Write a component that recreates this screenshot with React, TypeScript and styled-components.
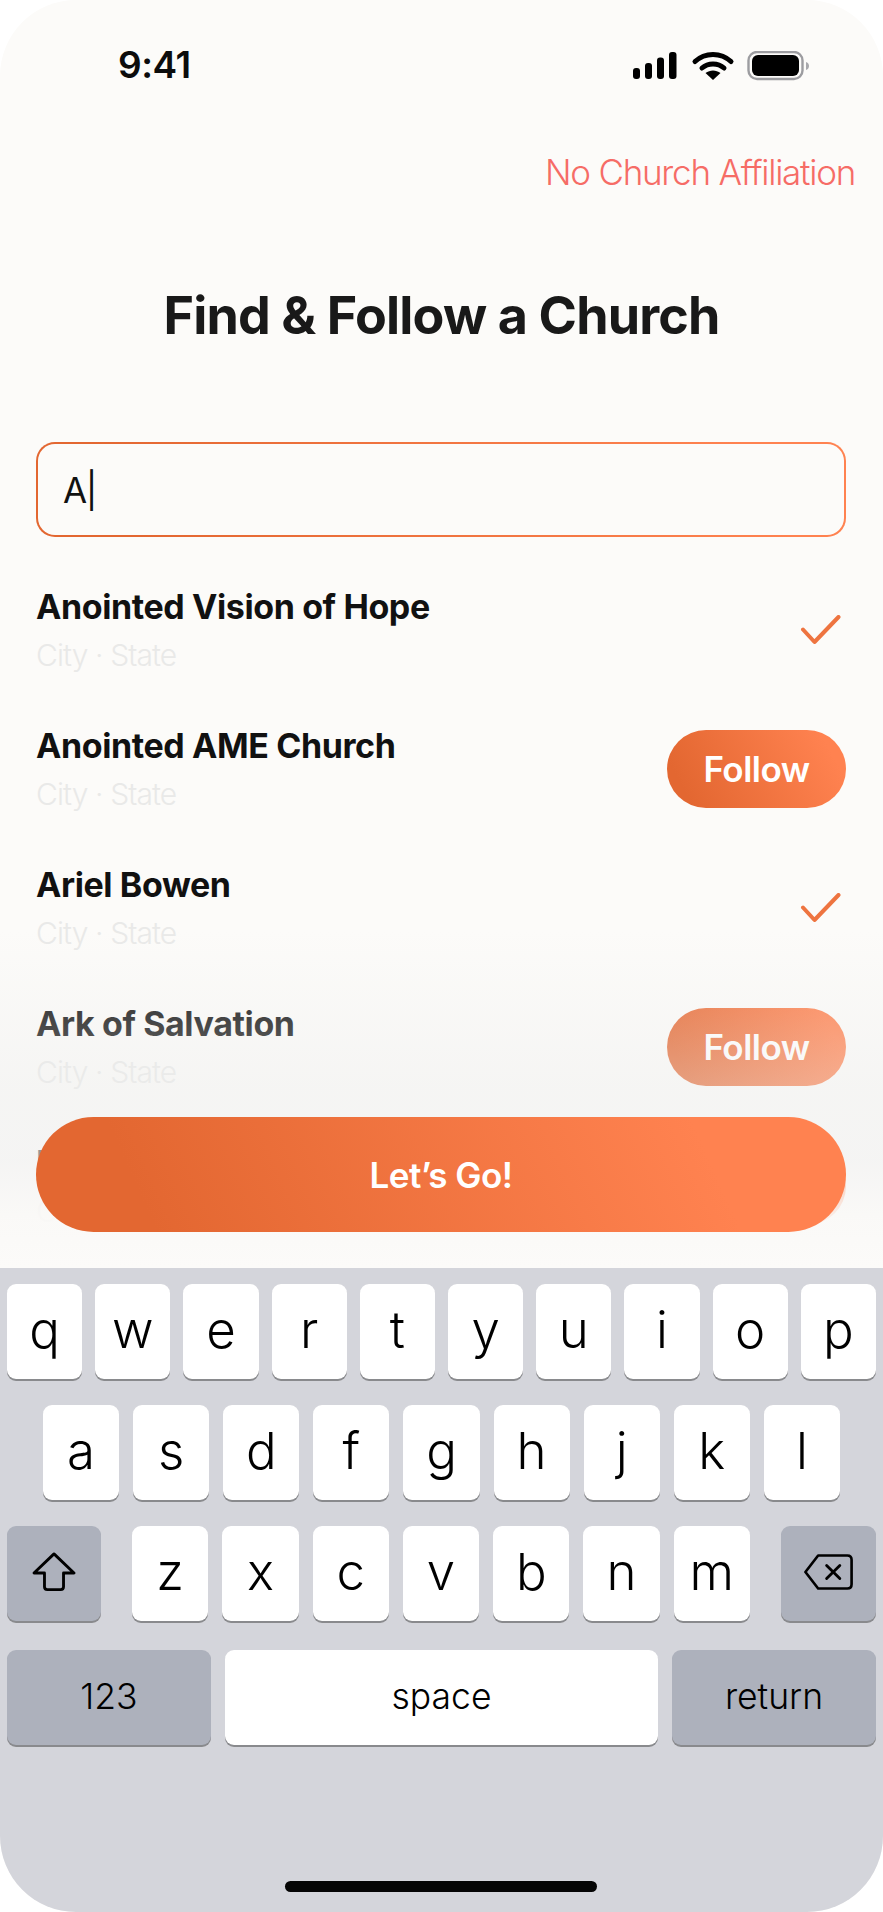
import React from 'react';
import styled, { createGlobalStyle } from 'styled-components';

const Global = createGlobalStyle`
  html, body { margin: 0; padding: 0; background: #fff; }
  * { box-sizing: border-box; }
`;

const ORANGE = 'linear-gradient(62deg, #E36731 12%, #FF8250 88%)';
const BG = '#FCFBF9';

const Phone = styled.div`
  position: relative;
  width: 883px;
  height: 1912px;
  border-radius: 76px;
  overflow: hidden;
  background: ${BG};
  display: flex;
  flex-direction: column;
  font-family: Inter, "Liberation Sans", sans-serif;
  color: #111;
`;

const StatusBar = styled.div`
  height: 152px;
  flex: none;
  padding: 51px 74px 0 118px;
  display: flex;
  justify-content: space-between;
  align-items: flex-start;
`;
const Time = styled.div`
  font-size: 37px;
  font-weight: 600;
  line-height: 28px;
  letter-spacing: -0.5px;
  color: #0c0c0c;
`;
const StatusIcons = styled.svg`
  display: block;
  width: 177px;
  height: 30px;
`;

const TopLink = styled.div`
  flex: none;
  text-align: right;
  padding-right: 28px;
  font-size: 35px;
  line-height: 40px;
  font-weight: 300;
  letter-spacing: -1.25px;
  color: #F66C66;
`;
const Title = styled.h1`
  flex: none;
  margin: 92px 0 0;
  text-align: center;
  font-size: 52px;
  line-height: 64px;
  font-weight: 700;
  letter-spacing: -0.85px;
  color: #191919;
`;

const Search = styled.div`
  flex: none;
  margin: 94px 37px 0 36px;
  height: 95px;
  border: 2.5px solid transparent;
  border-radius: 19px;
  background: linear-gradient(${BG}, ${BG}) padding-box, ${ORANGE} border-box;
  display: flex;
  align-items: center;
  padding: 0 25px;
  font-size: 35px;
  font-weight: 400;
  letter-spacing: -1.5px;
  color: #111;
`;

const List = styled.div`
  flex: 1;
  min-height: 0;
  overflow: hidden;
  margin-top: 54px;
  padding: 0 37px 0 36px;
  display: flex;
  flex-direction: column;
  gap: 61px;
`;
const Row = styled.div`
  flex: none;
  height: 78px;
  display: flex;
  align-items: center;
  justify-content: space-between;
`;
const RowText = styled.div`
  display: flex;
  flex-direction: column;
  gap: 12px;
`;
const Name = styled.div`
  font-size: 34px;
  line-height: 38px;
  font-weight: 650;
  letter-spacing: -0.4px;
  color: #111;
`;
const Place = styled.div`
  font-size: 30px;
  line-height: 34px;
  font-weight: 350;
  letter-spacing: -0.9px;
  color: #E9E9E8;
`;
const FollowButton = styled.div`
  width: 179px;
  height: 78px;
  border-radius: 39px;
  background: ${ORANGE};
  color: #fff;
  font-size: 35px;
  font-weight: 600;
  letter-spacing: -0.5px;
  display: flex;
  align-items: center;
  justify-content: center;
`;
const CheckIcon = styled.svg`
  display: block;
  width: 42px;
  height: 30px;
  margin-right: 4px;
`;

const Fade = styled.div`
  position: absolute;
  left: 0;
  right: 0;
  top: 930px;
  height: 338px;
  pointer-events: none;
  background: linear-gradient(
    180deg,
    rgba(236, 237, 236, 0) 0%,
    rgba(236, 237, 236, 0.25) 28%,
    rgba(236, 237, 236, 0.42) 46%,
    rgba(240, 240, 240, 0.62) 68%,
    rgba(250, 249, 247, 0.9) 85%,
    ${BG} 100%
  );
`;
const GoButton = styled.div`
  position: absolute;
  left: 36px;
  right: 37px;
  top: 1117px;
  height: 115px;
  border-radius: 58px;
  background: linear-gradient(66deg, #E36731 14%, #FF8250 82%);
  color: #fff;
  font-size: 35px;
  font-weight: 600;
  letter-spacing: -0.5px;
  display: flex;
  align-items: center;
  justify-content: center;
`;

const Keyboard = styled.div`
  flex: none;
  height: 644px;
  background: #D4D5DB;
  padding: 16px 7px 0;
  display: flex;
  flex-direction: column;
  gap: 26px;
  position: relative;
`;
const KeyRow = styled.div<{ $gap: number; $pad?: number; $top?: number }>`
  display: flex;
  justify-content: space-between;
  align-items: stretch;
  height: 95px;
  gap: ${(p) => p.$gap}px;
  padding: 0 ${(p) => p.$pad ?? 0}px;
  margin-top: ${(p) => p.$top ?? 0}px;
`;
const Key = styled.div<{ $w?: number; $dark?: boolean; $small?: boolean }>`
  flex: ${(p) => (p.$w ? `0 0 ${p.$w}px` : '1 1 0')};
  height: 95px;
  border-radius: 9px;
  background: ${(p) => (p.$dark ? '#ADB1BC' : '#FFFFFF')};
  box-shadow: 0 2px 0 #898A8D;
  display: flex;
  align-items: center;
  justify-content: center;
  font-size: ${(p) => (p.$small ? 35.5 : 51)}px;
  font-weight: 300;
  color: #000;
  padding-bottom: ${(p) => (p.$small ? 2 : 4)}px;
`;
const LetterGroup = styled.div`
  flex: 1;
  display: flex;
  gap: 14px;
`;
const KeyIcon = styled.svg`
  display: block;
`;
const HomeBar = styled.div`
  position: absolute;
  left: 285px;
  top: 613px;
  width: 312px;
  height: 11px;
  border-radius: 6px;
  background: #050505;
`;

const churches: { name: string; followed: boolean }[] = [
  { name: 'Anointed Vision of Hope', followed: true },
  { name: 'Anointed AME Church', followed: false },
  { name: 'Ariel Bowen', followed: true },
  { name: 'Ark of Salvation', followed: false },
  { name: 'Bethel Temple', followed: false },
];

const Check = () => (
  <CheckIcon viewBox="0 0 42 30" fill="none">
    <path d="M3 14.5 L14.5 27 L38.5 2" stroke="#EE7440" strokeWidth="4" strokeLinecap="round" strokeLinejoin="round" />
  </CheckIcon>
);

export default function App() {
  return (
    <Phone>
      <Global />
      <StatusBar>
        <Time>9:41</Time>
        <StatusIcons viewBox="0 0 177 30">
          <rect x="1" y="17" width="7" height="11" rx="3" fill="#000" />
          <rect x="13" y="12" width="7" height="16" rx="3" fill="#000" />
          <rect x="25" y="6.5" width="7" height="21.5" rx="3" fill="#000" />
          <rect x="37" y="1" width="7.5" height="27" rx="3" fill="#000" />
          <path d="M63 10.5 C73 1 89 1 99 10.5" stroke="#000" strokeWidth="5" fill="none" strokeLinecap="round" />
          <path d="M70 17 C76 11.5 86 11.5 92 17" stroke="#000" strokeWidth="5" fill="none" strokeLinecap="round" />
          <path d="M73.5 22 C78 18.5 84 18.5 88.5 22 L81 29 Z" fill="#000" />
          <rect x="116.5" y="1" width="54" height="27" rx="8.5" fill="none" stroke="#9C9CA0" strokeWidth="2.4" />
          <rect x="120" y="4" width="47" height="21" rx="6" fill="#000" />
          <path d="M174 11 C176.5 12 177 13.5 177 15 C177 16.500 176.5 18 174 19 Z" fill="#A8A8AC" />
        </StatusIcons>
      </StatusBar>
      <TopLink>No Church Affiliation</TopLink>
      <Title>Find &amp; Follow a Church</Title>
      <Search>A|</Search>
      <List>
        {churches.map((c) => (
          <Row key={c.name}>
            <RowText>
              <Name>{c.name}</Name>
              <Place>City · State</Place>
            </RowText>
            {c.followed ? <Check /> : <FollowButton>Follow</FollowButton>}
          </Row>
        ))}
      </List>
      <Fade />
      <GoButton>Let’s Go!</GoButton>
      <Keyboard>
        <KeyRow $gap={13}>
          {'qwertyuiop'.split('').map((k) => (
            <Key key={k}>{k}</Key>
          ))}
        </KeyRow>
        <KeyRow $gap={14} $pad={36}>
          {'asdfghjkl'.split('').map((k) => (
            <Key key={k}>{k}</Key>
          ))}
        </KeyRow>
        <KeyRow $gap={31}>
          <Key $w={94} $dark>
            <KeyIcon width="44" height="40" viewBox="0 0 46 42" fill="none">
              <path d="M23 2 L44 22 H33 V36.500 Q33 39.500 30 39.500 H16 Q13 39.500 13 36.500 V22 H2 Z" stroke="#000" strokeWidth="3" strokeLinejoin="round" />
            </KeyIcon>
          </Key>
          <LetterGroup>
            {'zxcvbnm'.split('').map((k) => (
              <Key key={k}>{k}</Key>
            ))}
          </LetterGroup>
          <Key $w={95} $dark>
            <KeyIcon width="49" height="38" viewBox="0 0 52 38" fill="none">
              <path d="M15 1.500 H46 Q50.500 1.500 50.500 6 V32 Q50.500 36.500 46 36.500 H15 L1.500 19 Z" stroke="#000" strokeWidth="2.800" strokeLinejoin="round" />
              <path d="M24 12 L38 26 M38 12 L24 26" stroke="#000" strokeWidth="3" strokeLinecap="round" />
            </KeyIcon>
          </Key>
        </KeyRow>
        <KeyRow $gap={14} $top={3}>
          <Key $w={204} $dark $small>123</Key>
          <Key $small>space</Key>
          <Key $w={204} $dark $small>return</Key>
        </KeyRow>
        <HomeBar />
      </Keyboard>
    </Phone>
  );
}
